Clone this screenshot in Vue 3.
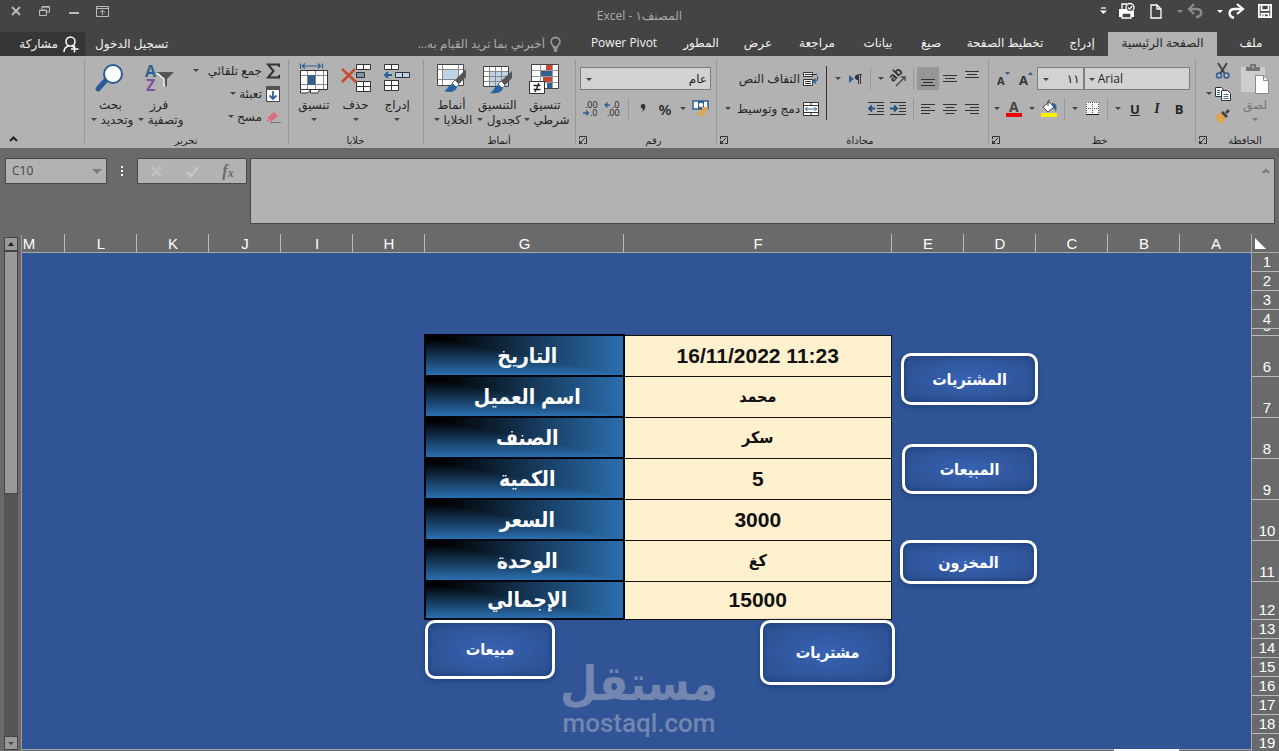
<script setup>
import { ref } from 'vue'

const tabs = ['ملف', 'الصفحة الرئيسية', 'إدراج', 'تخطيط الصفحة', 'صيغ', 'بيانات', 'مراجعة', 'عرض', 'المطور', 'Power Pivot']
const activeTab = ref(1)

const columns = ['A', 'B', 'C', 'D', 'E', 'F', 'G', 'H', 'I', 'J', 'K', 'L', 'M']
const rowKind = (n) => (n === 5 ? 'slim' : n >= 6 && n <= 11 ? 'tall' : n === 12 ? 'total' : '')
const columnKind = (c) => (c === 'F' ? 'wide-f' : c === 'G' ? 'wide-g' : '')

const records = [
  { label: 'التاريخ', value: '16/11/2022 11:23' },
  { label: 'اسم العميل', value: 'محمد', arabic: true },
  { label: 'الصنف', value: 'سكر', arabic: true },
  { label: 'الكمية', value: '5' },
  { label: 'السعر', value: '3000' },
  { label: 'الوحدة', value: 'كغ', arabic: true },
  { label: 'الإجمالي', value: '15000' },
]

const shapes = [
  { text: 'المشتريات', kind: 'purchases' },
  { text: 'المبيعات', kind: 'sales' },
  { text: 'المخزون', kind: 'stock' },
  { text: 'مشتريات', kind: 'add-purchase' },
  { text: 'مبيعات', kind: 'add-sale' },
]
const cellName = ref('C10')
const formula = ref('')
</script>

<template>
  <div class="app" dir="rtl">
    <header class="titlebar">
      <div class="quick">
        <button aria-label="حفظ"><svg width="14" height="14" viewBox="0 0 16 16"><path d="M1 1h14v14H1z M4 1v6h8V1 M4 15v-4h8v4" fill="none" stroke="#fff" stroke-width="2"/><path d="M6 12h2v3H6z" fill="#fff"/></svg></button>
        <button class="redo" aria-label="إعادة"><svg width="16" height="16" viewBox="0 0 16 16"><path d="M6 15C0 13 0 6 7 6h6" fill="none" stroke="#fff" stroke-width="2.4"/><path d="M9 1l6 5-6 5" fill="none" stroke="#fff" stroke-width="2.2"/></svg></button>
        <i class="caret light"></i>
        <button class="undo" aria-label="تراجع"><svg width="16" height="16" viewBox="0 0 16 16"><path d="M9 14c7-1 7-8 0-8H3" fill="none" stroke="#8b8b8b" stroke-width="2.4"/><path d="M7 1L2 6l5 5" fill="none" stroke="#8b8b8b" stroke-width="2.2"/></svg></button>
        <i class="caret dim"></i>
        <button class="new-file" aria-label="جديد"><svg width="12" height="15" viewBox="0 0 12 15"><path d="M1 1h6l4 4v9H1z M7 1v4h4" fill="none" stroke="#fff" stroke-width="1.3"/></svg></button>
        <button class="preview" aria-label="معاينة الطباعة"><svg width="18" height="16" viewBox="0 0 18 16"><path d="M4 6V1h5" fill="none" stroke="#fff" stroke-width="1.3"/><path d="M1 6h7l3 2h5v6H1z" fill="#fff"/><circle cx="12" cy="4.500" r="4" fill="#444" stroke="#fff" stroke-width="1.3"/><path d="M10 4.500l1.600 1.600L14.300 3" fill="none" stroke="#fff" stroke-width="1.300"/><path d="M4 10h9v5H4z" fill="#444" stroke="#fff" stroke-width="1.300"/></svg></button>
        <button class="customize" aria-label="تخصيص"><svg width="7" height="8" viewBox="0 0 7 8"><path d="M1 1h5" stroke="#fff" stroke-width="1.200"/><path d="M0 3.500h7L3.500 7z" fill="#fff"/></svg></button>
      </div>
      <h1>المصنف١ - Excel</h1>
      <div class="window">
        <button aria-label="خيارات الشريط"><svg width="13" height="11" viewBox="0 0 13 11"><path d="M.5.500h12v10H.5z M1 2.500h11 M6.500 9V4.500 M4 6.500l2.500-2.300L9 6.500" fill="none" stroke="#bbb"/></svg></button>
        <button aria-label="تصغير"><svg width="10" height="10" viewBox="0 0 10 10"><path d="M0 7h10" stroke="#bbb" stroke-width="2"/></svg></button>
        <button aria-label="استعادة"><svg width="11" height="10" viewBox="0 0 11 10"><path d="M.5 4h7v5.500h-7z M.5 4.500h7 M3 3.500V.5h7.500V6H8 M3 1.200h7" fill="none" stroke="#bbb"/></svg></button>
        <button aria-label="إغلاق"><svg width="10" height="10" viewBox="0 0 10 10"><path d="M1 1l8 8M9 1L1 9" stroke="#bbb" stroke-width="1.800"/></svg></button>
      </div>
    </header>

    <div class="tabbar">
      <nav>
        <button v-for="(t, i) in tabs" :key="t" :class="{ active: i === activeTab, file: i === 0 }" @click="activeTab = i">{{ t }}</button>
      </nav>
      <label class="tell">
        <svg width="11" height="15" viewBox="0 0 11 15"><path d="M3.500 10C3.500 8 1 7.500 1 4.800a4.500 4.300 0 0 1 9 0C10 7.500 7.500 8 7.500 10z" fill="none" stroke="#aaa" stroke-width="1.300"/><path d="M3.500 12h4M4 14h3" stroke="#aaa" stroke-width="1.300"/></svg>
        <input type="text" placeholder="أخبرني بما تريد القيام به..." aria-label="أخبرني بما تريد القيام به">
      </label>
      <a class="signin" href="#">تسجيل الدخول</a>
      <button class="share">
        <svg width="16" height="17" viewBox="0 0 16 17"><circle cx="7.500" cy="5.500" r="4.500" fill="none" stroke="#fff" stroke-width="1.500"/><path d="M1 16c0-3 2-5.500 5-6 M9 10l2 1.500 M11.500 9.500v7 M8 13h7.500" fill="none" stroke="#fff" stroke-width="1.500"/></svg>
        <span>مشاركة</span>
      </button>
    </div>

    <section class="ribbon">
      <div class="group clipboard">
        <div class="body">
          <button class="large disabled">
            <svg width="28" height="32" viewBox="0 0 28 32"><path d="M0 4h24v25H0z" fill="#cdcdcd"/><path d="M5 8V4h4V1h6v3h4v4z" fill="#747474"/><path d="M11 3h2v2h-2z" fill="#b2b2b2"/><path d="M14.500 12.500h8l5 5v13h-13z" fill="#fff" stroke="#8b8b8b"/><path d="M22.500 12.500v5h5" fill="none" stroke="#8b8b8b"/></svg>
            <span>لصق</span><i class="caret"></i>
          </button>
          <div class="stack">
            <button aria-label="قص"><svg width="16" height="16" viewBox="0 0 16 16"><path d="M3 0l7 11M12 0L5 11" stroke="#444" stroke-width="2"/><circle cx="4" cy="12.500" r="2.500" fill="none" stroke="#315f91" stroke-width="1.500"/><circle cx="11.500" cy="12.500" r="2.500" fill="none" stroke="#315f91" stroke-width="1.500"/></svg></button>
            <span class="pair"><button aria-label="نسخ"><svg width="16" height="14" viewBox="0 0 16 14"><path d="M.5.500h6l2 2v7h-8z" fill="#fff" stroke="#333"/><path d="M6.500 3.500h6l3 3v7h-9z" fill="#fff" stroke="#333"/><path d="M2 3.500h3M2 5.500h3M2 7.500h3M8.500 7.500h5M8.500 9.500h5M8.500 11.500h5" stroke="#41719c"/></svg></button><i class="caret"></i></span>
            <button aria-label="نسخ التنسيق"><svg width="16" height="15" viewBox="0 0 16 15"><path d="M2 5l5-1 4 4-2 4-4 3-4-6z" fill="#dfa552"/><path d="M6 4l2-2 5 5-2 2z M10 3l3-3 2 2-3 3z" fill="#444"/></svg></button>
          </div>
        </div>
        <footer><b>الحافظة</b><button class="launch" aria-label="خيارات الحافظة"><svg width="8" height="8" viewBox="0 0 8 8"><path d="M.5 3V.5h7v7H5" fill="none" stroke="#333"/><path d="M6 2L2 6" stroke="#333"/><path d="M0 4v4h4z" fill="#333"/></svg></button></footer>
      </div>

      <div class="group font">
        <div class="body rows">
          <div class="row">
            <label class="combo family"><select aria-label="الخط"><option>Arial</option></select><i class="caret"></i></label>
            <label class="combo size"><select aria-label="حجم الخط"><option>١١</option></select><i class="caret"></i></label>
            <button class="tool" aria-label="تكبير الخط"><svg width="16" height="16" viewBox="0 0 16 16"><text x="1" y="14" font-size="13" font-weight="bold" fill="#333">A</text><path d="M10 4h5l-2.500-3z" fill="#315f91"/></svg></button>
            <button class="tool" aria-label="تصغير الخط"><svg width="16" height="16" viewBox="0 0 16 16"><text x="1" y="14" font-size="11" font-weight="bold" fill="#333">A</text><path d="M9 1h5l-2.500 3z" fill="#315f91"/></svg></button>
          </div>
          <div class="row">
            <button class="tool letter bold">B</button>
            <button class="tool letter italic">I</button>
            <button class="tool letter under">U</button>
            <i class="caret"></i><i class="sep"></i>
            <button class="tool" aria-label="حدود"><svg width="13" height="13" viewBox="0 0 13 13"><path d="M0 0h13v13H0z" fill="#f4f4f4"/><path d="M.5 0v12M6.500 0v12M12.500 0v12M0 .5h13M0 6.500h13" stroke="#555" stroke-dasharray="1 1"/><path d="M0 12.500h13" stroke="#222"/></svg></button>
            <i class="caret"></i><i class="sep"></i>
            <button class="tool" aria-label="لون التعبئة"><svg width="16" height="17" viewBox="0 0 16 17"><path d="M2 7l6-5 5 5-6 5z" fill="#fff" stroke="#444"/><path d="M7 6V1c1-1 2-1 2 0" fill="none" stroke="#444"/><path d="M11 3c5 0 5 5 4 9-1-3-2-4-3-4z" fill="#315f91"/><path d="M0 13h16v4H0z" fill="#ffee00"/></svg></button>
            <i class="caret"></i>
            <button class="tool" aria-label="لون الخط"><svg width="16" height="17" viewBox="0 0 16 17"><text x="3" y="12" font-size="14" font-weight="bold" fill="#444">A</text><path d="M0 13h16v4H0z" fill="#f00000"/></svg></button>
            <i class="caret"></i>
          </div>
        </div>
        <footer><b>خط</b><button class="launch" aria-label="خيارات الخط"><svg width="8" height="8" viewBox="0 0 8 8"><path d="M.5 3V.5h7v7H5" fill="none" stroke="#333"/><path d="M6 2L2 6" stroke="#333"/><path d="M0 4v4h4z" fill="#333"/></svg></button></footer>
      </div>

      <div class="group alignment">
        <div class="body">
          <div class="rows fixed">
            <div class="row">
              <button class="tool high" aria-label="محاذاة علوية"><svg width="14" height="8" viewBox="0 0 14 8"><path d="M0 .5h14M2 3.500h10M0 6.500h14" stroke="#333"/></svg></button>
              <button class="tool" aria-label="محاذاة وسطى"><svg width="14" height="8" viewBox="0 0 14 8"><path d="M0 .5h14M2 3.500h10M0 6.500h14" stroke="#333"/></svg></button>
              <button class="tool pressed" aria-label="محاذاة سفلية"><svg width="14" height="8" viewBox="0 0 14 8"><path d="M0 .5h14M2 3.500h10M0 6.500h14" stroke="#333"/></svg></button>
              <i class="sep"></i>
              <button class="tool" aria-label="الاتجاه"><svg width="18" height="16" viewBox="0 0 18 16"><text x="2" y="9" font-size="12" font-weight="bold" fill="#333" transform="rotate(-45 6 8)">ab</text><path d="M7 15L16 6M12 6h4v4" fill="none" stroke="#444" stroke-width="1.300"/></svg></button>
              <i class="caret"></i><i class="sep"></i>
              <button class="tool" aria-label="اتجاه النص"><svg width="13" height="10" viewBox="0 0 13 10"><path d="M0 1l5 4-5 4z" fill="#315f91"/><path d="M9 1a2.500 2 0 0 0 0 4.500z" fill="#333" stroke="#333"/><path d="M9.500 10V.5H13M11.500 0v10" fill="none" stroke="#333"/></svg></button>
              <i class="caret"></i>
            </div>
            <div class="row">
              <button class="tool" aria-label="محاذاة لليمين"><svg width="14" height="10" viewBox="0 0 14 10"><path d="M0 .5h14M5 3.500h9M0 6.500h14M5 9.500h9" stroke="#333"/></svg></button>
              <button class="tool" aria-label="توسيط"><svg width="14" height="10" viewBox="0 0 14 10"><path d="M0 .5h14M2.500 3.500h9M0 6.500h14M2.500 9.500h9" stroke="#333"/></svg></button>
              <button class="tool" aria-label="محاذاة لليسار"><svg width="14" height="10" viewBox="0 0 14 10"><path d="M0 .5h14M0 3.500h9M0 6.500h14M0 9.500h9" stroke="#333"/></svg></button>
              <i class="sep"></i>
              <button class="tool" aria-label="زيادة المسافة"><svg width="16" height="13" viewBox="0 0 16 13"><path d="M0 .5h16M9 3.500h7M9 6.500h7M9 9.500h7M0 12.500h16" stroke="#333"/><path d="M0 6.500h6M4 3.500l3 3-3 3" fill="none" stroke="#27527f" stroke-width="1.800"/></svg></button>
              <button class="tool" aria-label="إنقاص المسافة"><svg width="16" height="13" viewBox="0 0 16 13"><path d="M0 .5h16M9 3.500h7M9 6.500h7M9 9.500h7M0 12.500h16" stroke="#333"/><path d="M1 6.500h6M4 3.500l-3 3 3 3" fill="none" stroke="#27527f" stroke-width="1.800"/></svg></button>
            </div>
          </div>
          <i class="divider"></i>
          <div class="rows grow">
            <button class="labelled"><svg width="16" height="16" viewBox="0 0 16 16"><path d="M.5 1.500h9v4h-9z M.5 8.500h9v6h-9z" fill="#fff" stroke="#333"/><path d="M2 3.500h12M2 10.500h6M2 12.500h6" stroke="#333"/><path d="M14.500 5c1 4-1 5-4 5M12.500 7.500L10 10l3 2.500" fill="none" stroke="#315f91" stroke-width="1.300"/></svg><span>التفاف النص</span></button>
            <div class="row"><button class="labelled"><svg width="16" height="16" viewBox="0 0 16 16"><path d="M.5 1.500h15v13H.5z M.5 4.500h15M.5 11.500h15M8 1v3M8 12v3" fill="#fff" stroke="#333"/><path d="M2 8h12M4.500 6L2.500 8l2 2M11.500 6l2 2-2 2" fill="none" stroke="#315f91"/></svg><span>دمج وتوسيط</span></button><i class="caret end"></i></div>
          </div>
        </div>
        <footer><b>محاذاة</b><button class="launch" aria-label="خيارات المحاذاة"><svg width="8" height="8" viewBox="0 0 8 8"><path d="M.5 3V.5h7v7H5" fill="none" stroke="#333"/><path d="M6 2L2 6" stroke="#333"/><path d="M0 4v4h4z" fill="#333"/></svg></button></footer>
      </div>

      <div class="group number">
        <div class="body rows">
          <div class="row"><label class="combo format"><select aria-label="تنسيق الأرقام"><option>عام</option></select><i class="caret"></i></label></div>
          <div class="row">
            <button class="tool" aria-label="عملة"><svg width="17" height="17" viewBox="0 0 17 17"><path d="M1 1h15v8H1z" fill="#fff" stroke="#315f91" stroke-width="1.500"/><path d="M6 1h6v8H6z" fill="#315f91"/><circle cx="9" cy="5" r="2.200" fill="#fff"/><path d="M10 7h6v3h-6z M8 10h6v3H8z M5 13h6v3H5z" fill="#dfa552"/></svg></button>
            <i class="caret"></i>
            <button class="tool letter percent">%</button>
            <button class="tool" aria-label="فاصلة"><svg width="6" height="9" viewBox="0 0 6 9"><path d="M3 0a2.300 2.300 0 0 1 2.300 2.600C5.300 5 4 7 1.500 8 2.800 6.500 3 5.500 3 4.700A2.300 2.300 0 0 1 3 0z" fill="#333"/></svg></button>
            <i class="sep"></i>
            <button class="tool" aria-label="إنقاص المنازل العشرية"><svg width="16" height="16" viewBox="0 0 16 16"><text x="7" y="7" font-size="9" fill="#222">.0</text><text x="2" y="15" font-size="9" fill="#222">.00</text><path d="M0 4h5M2.500 1.500L0 4l2.500 2.500" fill="none" stroke="#315f91" stroke-width="1.300"/></svg></button>
            <button class="tool" aria-label="زيادة المنازل العشرية"><svg width="16" height="16" viewBox="0 0 16 16"><text x="2" y="7" font-size="9" fill="#222">.00</text><text x="7" y="15" font-size="9" fill="#222">.0</text><path d="M0 12h5M3 9.500L5.500 12 3 14.500" fill="none" stroke="#315f91" stroke-width="1.300"/></svg></button>
          </div>
        </div>
        <footer><b>رقم</b><button class="launch" aria-label="خيارات الأرقام"><svg width="8" height="8" viewBox="0 0 8 8"><path d="M.5 3V.5h7v7H5" fill="none" stroke="#333"/><path d="M6 2L2 6" stroke="#333"/><path d="M0 4v4h4z" fill="#333"/></svg></button></footer>
      </div>

      <div class="group styles">
        <div class="body">
          <button class="large">
            <svg width="32" height="32" viewBox="0 0 32 32"><path d="M2.500 1.500h27v24h-27z" fill="#fff" stroke="#444"/><path d="M17 2h6v6h-6z M14 14h9v5h-9z" fill="#c0492f"/><path d="M12 8h11v5H12z M18 20h6v5h-6z" fill="#315f91"/><path d="M11.500 2v23M23.500 2v23M3 7.500h26M3 13.500h26M3 19.500h26" stroke="#999"/><path d="M.5 18.500h15v12H.5z" fill="#fff" stroke="#333"/><path d="M4.500 22.500h7M4.500 26.500h7M10 20l-4 9" stroke="#222" stroke-width="1.300"/></svg>
            <span>تنسيق</span><span>شرطي <i class="caret"></i></span>
          </button>
          <button class="large">
            <svg width="32" height="32" viewBox="0 0 32 32"><path d="M2.500 3.500h25v20h-25z" fill="#fff" stroke="#444"/><path d="M9 9h18v14H9z" fill="#bdd3e8"/><path d="M3 8.500h24M3 13.500h24M3 18.500h24M8.500 4v19M14.500 4v19M20.500 4v19" stroke="#888"/><path d="M31 8v7l-8 8-4-4z" fill="#555"/><path d="M20 18l4 4c-1 2-2 3-4 3l-3-4z" fill="#fff" stroke="#666"/><path d="M9 30c4-1 4-8 9-8l4 3c-1 5-8 6-13 5z" fill="#2a61a0"/></svg>
            <span>التنسيق</span><span>كجدول <i class="caret"></i></span>
          </button>
          <button class="large">
            <svg width="32" height="32" viewBox="0 0 32 32"><path d="M2.500 1.500h26v21h-26z" fill="#fff" stroke="#444"/><path d="M7 6h17v11H7z" fill="#bdd3e8"/><path d="M3 6.500h25M3 16.500h25M7.500 2v20M23.500 2v20" stroke="#888"/><path d="M31 6v8l-8 8-4-4z" fill="#555"/><path d="M20 17l4 4c-1 2-2 3-4 3l-3-4z" fill="#fff" stroke="#666"/><path d="M9 28c4-1 4-7 9-7l4 3c-1 5-8 6-13 4z" fill="#2a61a0"/></svg>
            <span>أنماط</span><span>الخلايا <i class="caret"></i></span>
          </button>
        </div>
        <footer class="plain"><b>أنماط</b></footer>
      </div>

      <div class="group cells">
        <div class="body">
          <button class="large">
            <svg width="28" height="32" viewBox="0 0 28 32"><path d="M1.500 1.500h14v5h-14z M8.500 1.500v5 M1.500 17.500h14v10h-14z M8.500 17.500v10 M1.500 22.500h14" fill="#fff" stroke="#333"/><path d="M12.500 9.500h14v5h-14z M19.500 9.500v5" fill="#bdd3e8" stroke="#333"/><path d="M2 12h7M5 9l-3 3 3 3" fill="none" stroke="#27609b" stroke-width="1.800"/></svg>
            <span>إدراج</span><i class="caret"></i>
          </button>
          <button class="large">
            <svg width="30" height="32" viewBox="0 0 30 32"><path d="M15.500 1.500h14v5h-14z M22.500 1.500v5 M15.500 18.500h14v10h-14z M22.500 18.500v10 M15.500 23.500h14" fill="#fff" stroke="#333"/><path d="M15.500 9.500h8v5h-8z" fill="#8395a8" stroke="#333"/><path d="M1 6l14 13M14 6L1 19" stroke="#c84b31" stroke-width="2.500"/></svg>
            <span>حذف</span><i class="caret"></i>
          </button>
          <button class="large">
            <svg width="30" height="32" viewBox="0 0 30 32"><path d="M1.500.500v5M23.500.500v5M3 3h19M6 .5L3.500 3 6 5.500M19 .5L21.500 3 19 5.500" fill="none" stroke="#315f91" stroke-width="1.200"/><path d="M1.500 7.500h27v19h-27z" fill="#fff" stroke="#333"/><path d="M8.500 8v18M16.500 8v18M24.500 8v18M2 12.500h26M2 21.500h26" stroke="#888"/><path d="M9 12h7v10H9z" fill="#315f91"/><path d="M1.500 27v3h7l3-3v3h7l2-3" fill="#fff" stroke="#333"/></svg>
            <span>تنسيق</span><i class="caret"></i>
          </button>
        </div>
        <footer class="plain"><b>خلايا</b></footer>
      </div>

      <div class="group editing">
        <div class="body">
          <div class="stack words">
            <span class="pair"><button class="labelled"><svg width="16" height="16" viewBox="0 0 16 16"><path d="M14 4V1.500H3L8.500 8 3 14.500h11V12" fill="none" stroke="#333" stroke-width="2"/></svg><span>جمع تلقائي</span></button><i class="caret far"></i></span>
            <span class="pair"><button class="labelled"><svg width="16" height="16" viewBox="0 0 16 16"><path d="M1.500.500h13v15h-13z" fill="#fff" stroke="#444"/><path d="M1 0h14v4H1z" fill="#555"/><path d="M8 5v8M4.500 9.500L8 13l3.500-3.500" fill="none" stroke="#315f91" stroke-width="1.800"/></svg><span>تعبئة</span></button><i class="caret"></i></span>
            <span class="pair"><button class="labelled"><svg width="16" height="16" viewBox="0 0 16 16"><path d="M2 9l7-6 4 4-7 6-4-1z" fill="#d96d80"/><path d="M2 9l4 4" stroke="#eab" /><path d="M5 13.500h11" stroke="#777"/></svg><span>مسح</span></button><i class="caret"></i></span>
          </div>
          <button class="large sort">
            <svg width="32" height="32" viewBox="0 0 32 32"><text x="2" y="14" font-size="16" font-weight="bold" fill="#315f91">A</text><text x="3" y="28" font-size="16" font-weight="bold" fill="#8050a0">Z</text><path d="M13 9h18l-7 7v8l-4-3v-5z" fill="#555"/><path d="M14 10l7 6v7" fill="none" stroke="#fff" stroke-width="1.500"/></svg>
            <span>فرز</span><span>وتصفية <i class="caret"></i></span>
          </button>
          <button class="large find">
            <svg width="30" height="32" viewBox="0 0 30 32"><path d="M11 17L3 26" stroke="#2a5b96" stroke-width="5" stroke-linecap="round"/><circle cx="18" cy="11" r="9" fill="#fff" stroke="#2a5b96" stroke-width="2"/></svg>
            <span>بحث</span><span>وتحديد <i class="caret"></i></span>
          </button>
        </div>
        <footer class="plain"><b>تحرير</b></footer>
      </div>
      <button class="collapse" aria-label="طي الشريط"><svg width="9" height="6" viewBox="0 0 9 6"><path d="M1 5l3.500-3.500L8 5" fill="none" stroke="#222" stroke-width="2"/></svg></button>
    </section>

    <section class="formulabar" dir="ltr">
      <label class="namebox"><input v-model="cellName" type="text" aria-label="مربع الاسم"><i class="caret muted"></i></label>
      <i class="dots"></i>
      <div class="entry">
        <button aria-label="إلغاء"><svg width="11" height="11" viewBox="0 0 11 11"><path d="M1 1l9 9M10 1L1 10" stroke="#c4c4c4" stroke-width="2"/></svg></button>
        <button aria-label="إدخال"><svg width="13" height="11" viewBox="0 0 13 11"><path d="M1 6l4 4 7-9" fill="none" stroke="#c8c8c8" stroke-width="2.200"/></svg></button>
        <button class="fx">f<small>x</small></button>
      </div>
      <div class="formula">
        <textarea v-model="formula" aria-label="شريط الصيغة"></textarea>
        <button aria-label="طي شريط الصيغة"><svg width="8" height="6" viewBox="0 0 8 6"><path d="M1 5l3-3 3 3" fill="none" stroke="#7a7a7a" stroke-width="2"/></svg></button>
      </div>
    </section>

    <main class="workbook">
      <div class="rowheads">
        <button class="corner" aria-label="تحديد الكل"><svg width="11" height="11" viewBox="0 0 11 11"><path d="M0 0v11h11z" fill="#fff"/></svg></button>
        <div v-for="n in 19" :key="n" class="rowhead" :class="rowKind(n)"><span>{{ n }}</span></div>
      </div>
      <div class="sheet">
        <div class="colheads"><div v-for="c in columns" :key="c" class="colhead" :class="columnKind(c)">{{ c }}</div></div>
        <div class="canvas">
          <table>
            <tbody>
              <tr v-for="r in records" :key="r.label">
                <td :class="{ arabic: r.arabic }"><bdi>{{ r.value }}</bdi></td>
                <th scope="row">{{ r.label }}</th>
              </tr>
            </tbody>
          </table>
          <button v-for="s in shapes" :key="s.kind" class="shape" :class="s.kind">{{ s.text }}</button>
          <div class="watermark"><b>مستقل</b><span>mostaql.com</span></div>
        </div>
        <div class="sheettabs"><i></i></div>
      </div>
      <div class="scroll">
        <button aria-label="لأعلى"><i class="caret up"></i></button>
        <div class="track"><div class="thumb"></div></div>
        <button aria-label="لأسفل"><i class="caret"></i></button>
      </div>
    </main>
  </div>
</template>

<style>
body { margin: 0; background: #6a6a6a; }
</style>

<style scoped>
.app { display: flex; flex-direction: column; height: 100vh; overflow: hidden; background: #6a6a6a; color: #262626; font: 12px/14px "Open Sans", "DejaVu Sans", sans-serif; }
* { box-sizing: border-box; }
button, input, select, textarea { font: inherit; color: inherit; border: 0; background: none; padding: 0; margin: 0; border-radius: 0; outline: 0; }
button { display: inline-flex; align-items: center; justify-content: center; white-space: nowrap; }
svg { display: block; flex: none; overflow: visible; font-family: "Open Sans", sans-serif; direction: ltr; }
i { font-style: normal; flex: none; }
.caret { display: inline-flex; width: 13px; height: 6px; align-items: center; justify-content: center; }
.caret::before { content: ""; border: 3px solid transparent; border-top: 3px solid #444; border-bottom: 0; }
.caret.up::before { border-top: 0; border-bottom: 4px solid #222; }
.caret.light::before { border-top-color: #fff; }
.caret.dim::before { border-top-color: #8b8b8b; }
.caret.muted::before { border-width: 5px 5px 0; border-top-color: #7c7c7c; }

.titlebar { display: grid; grid-template-columns: 1fr auto 1fr; height: 32px; flex: none; background: #444; color: #aaa; }
.titlebar h1 { margin: 0; font-size: 12px; line-height: 31px; font-weight: 400; }
.quick { display: flex; align-items: center; height: 22px; padding-right: 6px; }
.quick button { width: 17px; }
.quick .redo { margin-right: 12px; }
.quick .caret.light { margin-right: 1px; }
.quick .undo { margin-right: 10px; }
.quick .new-file { margin-right: 9px; }
.quick .preview { margin-right: 12px; }
.quick .customize { margin-right: 6px; }
.window { display: flex; align-items: center; justify-content: flex-end; height: 22px; padding-left: 8px; gap: 14px; }
.window button { width: 15px; }

.tabbar { display: flex; height: 24px; flex: none; background: #444; color: #f2f2f2; }
nav { display: grid; grid-template-columns: 62px 109px 52px 102px 46px 60px 62px 56px 58px 96px; }
nav button { padding-bottom: 2px; }
nav .active { background: #b2b2b2; color: #262626; }
nav .file { padding-left: 6px; }
.tell { display: flex; align-items: center; flex: 1; gap: 5px; padding-right: 15px; color: #aaa; }
.tell input { width: 160px; }
.tell input::placeholder { color: #aaa; opacity: 1; }
.signin { color: inherit; text-decoration: none; line-height: 24px; padding: 0 10px; }
.share { width: 85px; padding-right: 6px; justify-content: flex-start; background: #363636; gap: 5px; }

.ribbon { display: flex; height: 92px; flex: none; background: #b2b2b2; }
.group { position: relative; display: flex; flex-direction: column; flex: none; }
.group::after { content: ""; position: absolute; left: 0; top: 4px; bottom: 5px; width: 1px; background: #969696; }
.clipboard { width: 84px; }
.font { width: 207px; }
.alignment { width: 272px; }
.number { width: 141px; }
.styles { width: 152px; }
.cells { width: 135px; }
.editing { width: 204px; }
.body { display: flex; flex: 1; padding: 0 5px; }
footer { display: flex; align-items: center; height: 16px; gap: 4px; padding-left: 4px; text-align: center; }
footer.plain { padding: 0; }
footer b { flex: 1; font-weight: 400; font-size: 10px; }
.rows { display: flex; flex-direction: column; gap: 7px; padding-top: 11px; }
.row { display: flex; height: 23px; align-items: center; }
.tool { width: 22px; height: 23px; flex: none; }
.tool.high { padding-bottom: 8px; }
.tool.pressed { background: #979797; padding-top: 8px; }
.sep { width: 8px; height: 22px; display: flex; justify-content: center; }
.sep::before { content: ""; width: 1px; background: #999; }
.letter { font-size: 14px; font-weight: 600; }
.percent { font-size: 15px; }
.italic { font-family: "Liberation Serif", serif; font-style: italic; font-weight: 700; }
.bold, .under { font-size: 13px; font-weight: 700; }
.under { text-decoration: underline; }
.combo { position: relative; height: 23px; border: 1px solid #7d7d7d; background: #d2d2d2; }
.combo select { appearance: none; width: 100%; height: 100%; padding: 0 3px 0 13px; }
.combo .caret { position: absolute; left: 1px; top: 8px; pointer-events: none; }
.family { width: 107px; }
.family select { direction: ltr; }
.size { width: 47px; }
.format { width: 131px; }
.fixed { width: 156px; }
.divider { width: 1px; height: 54px; margin: 10px 0 0 7px; background: #333; }
.grow { flex: 1; }
.labelled { height: 23px; gap: 3px; justify-content: flex-start; }
.caret.end { margin-right: auto; }
.large { flex-direction: column; justify-content: flex-start; padding-top: 7px; width: 46px; }
.large svg { margin-bottom: 2px; }
.large > span { display: flex; align-items: center; line-height: 15px; }
.large > .caret { margin-top: 4px; }
.large.disabled { color: #757575; width: 44px; }
.large.disabled .caret::before { border-top-color: #777; }
.clipboard .body { padding: 0 2px; gap: 2px; }
.stack { display: flex; flex-direction: column; padding-top: 3px; align-items: flex-start; }
.stack > * { height: 23px; display: flex; align-items: center; }
.styles .large { width: 48px; }
.styles .body { padding: 0 6px; }
.cells .large { width: 42px; }
.editing .body { padding: 0 7px 0 2px; }
.words { width: 100px; }
.far { margin-right: 5px; }
.sort { width: 50px; }
.find { width: 50px; }
.collapse { align-self: flex-end; margin: 0 auto 6px 9px; }

.formulabar { display: flex; align-items: flex-start; flex: none; height: 86px; padding: 10px 4px 10px 5px; }
.namebox { display: flex; align-items: center; width: 102px; height: 26px; border: 1px solid #484848; background: #b2b2b2; color: #444; }
.namebox input { flex: 1; min-width: 0; padding-left: 6px; font-size: 12px; }
.namebox .caret { margin-right: 3px; }
.dots { width: 30px; height: 26px; display: flex; align-items: center; justify-content: center; }
.dots::before { content: ""; width: 2px; height: 10px; background: repeating-linear-gradient(#fff 0 2px, transparent 2px 4px); }
.entry { display: flex; justify-content: space-around; width: 110px; height: 26px; border: 1px solid #484848; background: #b2b2b2; }
.entry button { width: 30px; }
.fx { color: #6b6b6b; font: italic 700 16px/20px "Liberation Serif", serif; }
.fx small { font-size: 12px; padding-top: 4px; }
.formula { display: flex; align-items: flex-start; flex: 1; height: 66px; margin-left: 3px; border: 1px solid #484848; background: #b2b2b2; }
.formula textarea { flex: 1; height: 100%; resize: none; padding: 5px; }
.formula button { padding: 9px 4px; }

.workbook { display: flex; flex: 1; min-height: 0; font: 15px/19px "Liberation Sans", "DejaVu Sans Condensed", "DejaVu Sans", sans-serif; color: #fff; }
.rowheads { width: 28px; flex: none; overflow: hidden; border-left: 1px solid #aaa; }
.corner { height: 19px; width: 100%; justify-content: flex-end; padding-left: 3px; border-bottom: 1px solid #aaa; display: flex; }
.rowhead { display: flex; align-items: flex-end; justify-content: center; height: 19px; border-bottom: 1px solid #bbb; overflow: hidden; padding-left: 3px; }
.rowhead.slim { height: 7px; }
.rowhead.tall { height: 41px; }
.rowhead.total { height: 38px; }
.sheet { display: flex; flex-direction: column; flex: 1; min-width: 0; overflow: hidden; border-left: 1px solid #999; }
.colheads { display: flex; height: 19px; flex: none; border-bottom: 1px solid #aaa; }
.colhead { flex: none; width: 72px; padding-left: 1px; text-align: center; border-left: 1px solid #bbb; }
.colhead.wide-f { width: 268px; }
.colhead.wide-g { width: 199px; }
.canvas { position: relative; flex: 1; min-height: 0; background: #305496; overflow: hidden; }
table { border-collapse: collapse; table-layout: fixed; width: 468px; margin: 81px 359px 0 0; font-size: 21px; line-height: 24px; font-weight: 700; }
tr { height: 41px; }
tr:last-child { height: 38px; }
td, th { padding: 0; text-align: center; }
td { width: 268px; background: #fff0ce; color: #111; border: 1px solid #111; }
td.arabic { font-size: 16px; }
th { padding-left: 6px; border: 2px solid #050510; background-color: #000; background-image: linear-gradient(to right, #000 8%, #2b6fb0), linear-gradient(to bottom, #000 8%, #2b6fb0); background-blend-mode: lighten; }
.shape { position: absolute; border: 3px solid #fff; border-radius: 10px; background: radial-gradient(ellipse at center, #3763b3, #2b4d8c); box-shadow: inset 0 0 5px #1d3a72, 0 2px 5px #22407a; font-size: 16px; font-weight: 700; color: #fff; }
.purchases { right: 213px; top: 100px; width: 137px; height: 52px; }
.sales { right: 214px; top: 191px; width: 135px; height: 50px; }
.stock { right: 214px; top: 287px; width: 137px; height: 44px; }
.add-purchase { right: 356px; top: 367px; width: 135px; height: 65px; }
.add-sale { right: 696px; top: 367px; width: 130px; height: 59px; }
.watermark { position: absolute; right: 535px; top: 404px; width: 154px; display: flex; flex-direction: column; align-items: center; color: #7286b0; }
.watermark b { font-size: 48px; line-height: 54px; }
.watermark span { font: 500 26px/24px Roboto, sans-serif; }
.sheettabs { height: 2px; flex: none; border-top: 1px solid #a0a3ab; background: #6a6a6a; padding-right: 72px; }
.sheettabs i { display: block; width: 65px; height: 2px; margin-top: -1px; background: #fff; }
.scroll { display: flex; flex-direction: column; width: 21px; flex: none; padding: 3px 3px 1px 4px; }
.scroll button { height: 14px; flex: none; border: 1px solid #444; background: #999; }
.track { flex: 1; background: #555; }
.thumb { height: 50%; border: 1px solid #444; background: #999; }
</style>
